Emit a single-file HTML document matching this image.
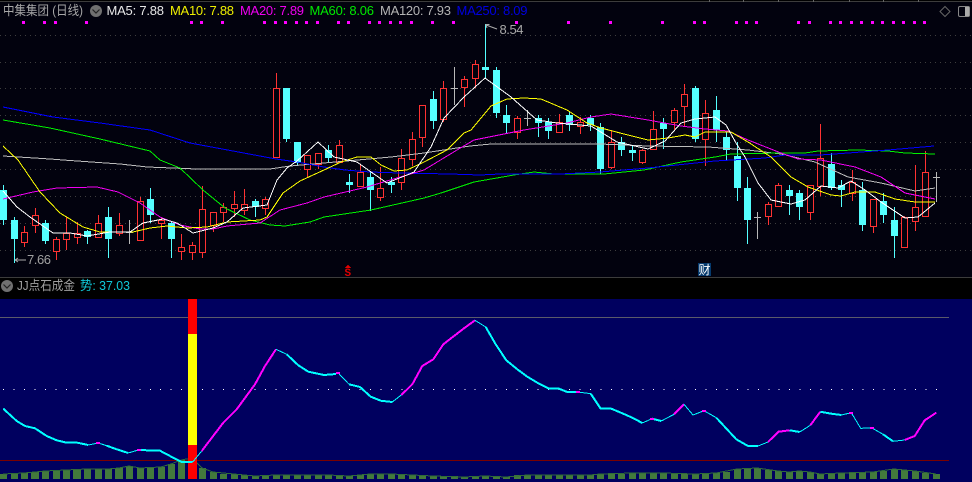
<!DOCTYPE html>
<html><head><meta charset="utf-8"><style>
html,body{margin:0;padding:0;background:#02020e;width:972px;height:482px;overflow:hidden}
svg{display:block}
text{font-family:"Liberation Sans","Noto Sans CJK SC",sans-serif;font-size:13px}
.a{shape-rendering:crispEdges}
.l{fill:none;stroke-width:1;shape-rendering:crispEdges}
</style></head><body>
<svg width="972" height="482" viewBox="0 0 972 482" xmlns="http://www.w3.org/2000/svg">
<rect width="972" height="482" fill="#02020e"/>
<rect class="a" y="0" width="972" height="2" fill="#000"/>
<rect class="a" y="1" width="972" height="1" fill="#3c3c3c"/>
<path class="a" d="M709.5 0v2M743.5 0v2M778.5 0v2M813.5 0v2M849.5 0v2M883.5 0v2M918.5 0v2" stroke="#666"/>
<!-- grid -->
<path class="a" d="M0 35.5H972M0 62.5H972M0 88.5H972M0 115.5H972M0 142.5H972M0 169.5H972M0 196.5H972M0 223.5H972M0 250.5H972" stroke="#3e3e3e" stroke-dasharray="1 4"/>
<!-- magenta markers -->
<path class="a" fill="#ff00ff" d="M22 21h3v3h-3zM43 21h3v3h-3zM54 21h3v3h-3zM85 21h3v3h-3zM190 21h3v3h-3zM200 21h3v3h-3zM221 21h3v3h-3zM263 21h3v3h-3zM274 21h3v3h-3zM284 21h3v3h-3zM295 21h3v3h-3zM305 21h3v3h-3zM316 21h3v3h-3zM337 21h3v3h-3zM347 21h3v3h-3zM368 21h3v3h-3zM378 21h3v3h-3zM389 21h3v3h-3zM399 21h3v3h-3zM410 21h3v3h-3zM431 21h3v3h-3zM452 21h3v3h-3zM515 21h3v3h-3zM567 21h3v3h-3zM609 21h3v3h-3zM661 21h3v3h-3zM693 21h3v3h-3zM703 21h3v3h-3zM735 21h3v3h-3zM745 21h3v3h-3zM755 21h3v3h-3zM797 21h3v3h-3zM808 21h3v3h-3zM829 21h3v3h-3zM839 21h3v3h-3zM850 21h3v3h-3zM860 21h3v3h-3zM871 21h3v3h-3zM881 21h3v3h-3zM892 21h3v3h-3zM902 21h3v3h-3zM913 21h3v3h-3zM923 21h3v3h-3z"/>
<!-- header text -->
<text x="3" y="15" fill="#a8a8a8" textLength="80" lengthAdjust="spacingAndGlyphs">中集集团 (日线)</text>
<circle cx="96" cy="11" r="6" fill="#707070"/><path d="M92.5 9.5l3.5 3.5 3.5-3.5" fill="none" stroke="#222" stroke-width="1.2"/>
<text x="106.5" y="15" fill="#e8e8e8" textLength="57.5">MA5: 7.88</text>
<text x="170" y="15" fill="#f0f000" textLength="64">MA10: 7.88</text>
<text x="240" y="15" fill="#f000f0" textLength="64">MA20: 7.89</text>
<text x="309.5" y="15" fill="#00e800" textLength="64.5">MA60: 8.06</text>
<text x="380" y="15" fill="#b4b4b4" textLength="71">MA120: 7.93</text>
<text x="456.5" y="15" fill="#0000e0" textLength="71">MA250: 8.09</text>
<!-- top right icons -->
<path d="M945 6.5l5 5-5 5-5-5z" fill="none" stroke="#666"/>
<rect x="958.5" y="6.5" width="11" height="10" rx="1.5" fill="none" stroke="#888"/><rect class="a" x="965" y="7" width="4" height="9" fill="#aaa"/>
<!-- wicks -->
<path class="a" stroke="#ff3232" d="M24.5 226V247M35.5 208V233M56.5 237V260M66.5 217V250M77.5 222V244M98.5 215V237M119.5 213V236M140.5 197V241M161.5 217V239M181.5 234V260M192.5 242V260M202.5 186V258M213.5 212V232M223.5 203V222M234.5 191V217M244.5 189V215M265.5 197V215M276.5 73V157M307.5 155V178M318.5 153V169M339.5 140V162M360.5 165V186M380.5 167V201M401.5 149V190M412.5 132V166M422.5 105V147M443.5 81V122M464.5 76V107M475.5 60V88M517.5 116V139M559.5 114V133M580.5 117V134M611.5 130V169M642.5 149V164M653.5 111V149M674.5 108V131M684.5 84V127M705.5 100V166M768.5 202V225M778.5 183V207M810.5 185V220M820.5 124V196M852.5 170V201M873.5 199V233M904.5 216V247M915.5 165V231M925.5 151V216"/>
<path class="a" stroke="#54ffff" d="M3.5 185V225M14.5 217V263M45.5 220V244M87.5 230V244M108.5 207V258M150.5 188V223M171.5 222V258M255.5 199V217M286.5 88V142M297.5 142V166M328.5 145V162M349.5 174V193M370.5 172V211M391.5 177V193M433.5 91V129M485.5 24V78M496.5 67V118M506.5 105V134M538.5 115V137M548.5 118V139M569.5 112V131M590.5 115V131M600.5 123V174M621.5 137V156M632.5 146V161M663.5 118V149M695.5 86V142M716.5 96V142M726.5 132V161M737.5 142V201M747.5 177V244M789.5 185V215M799.5 190V220M831.5 153V190M841.5 180V207M862.5 182V231M883.5 193V223M894.5 207V258"/>
<path class="a" stroke="#b8b8b8" d="M129.5 220V244M126 232.5H133M454.5 67V105M451 88.5H458M527.5 110V126M524 118.5H531M757.5 212V239M754 217.5H761M936.5 172V202M933 177.5H940"/>
<!-- bodies -->
<path class="a" fill="#02020e" stroke="#ff3232" d="M21.5 232.5h6V242.5h-6zM32.5 215.5h6V225.5h-6zM53.5 239.5h6V251.5h-6zM63.5 233.5h6V239.5h-6zM74.5 233.5h6V237.5h-6zM95.5 223.5h6V237.5h-6zM116.5 225.5h6V233.5h-6zM137.5 201.5h6V240.5h-6zM158.5 220.5h6V223.5h-6zM178.5 247.5h6V251.5h-6zM189.5 245.5h6V252.5h-6zM199.5 209.5h6V252.5h-6zM210.5 212.5h6V225.5h-6zM220.5 207.5h6V212.5h-6zM231.5 204.5h6V208.5h-6zM241.5 204.5h6V210.5h-6zM262.5 199.5h6V208.5h-6zM273.5 88.5h6V157.5h-6zM304.5 155.5h6V169.5h-6zM315.5 153.5h6V164.5h-6zM336.5 145.5h6V162.5h-6zM357.5 172.5h6V186.5h-6zM377.5 188.5h6V197.5h-6zM398.5 158.5h6V182.5h-6zM409.5 139.5h6V159.5h-6zM419.5 105.5h6V137.5h-6zM440.5 88.5h6V119.5h-6zM461.5 79.5h6V87.5h-6zM472.5 64.5h6V78.5h-6zM514.5 118.5h6V132.5h-6zM556.5 122.5h6V132.5h-6zM577.5 122.5h6V126.5h-6zM608.5 142.5h6V167.5h-6zM639.5 150.5h6V162.5h-6zM650.5 129.5h6V149.5h-6zM671.5 110.5h6V122.5h-6zM681.5 94.5h6V106.5h-6zM702.5 113.5h6V139.5h-6zM765.5 204.5h6V216.5h-6zM775.5 185.5h6V206.5h-6zM807.5 185.5h6V212.5h-6zM817.5 158.5h6V186.5h-6zM849.5 182.5h6V193.5h-6zM870.5 199.5h6V226.5h-6zM901.5 217.5h6V247.5h-6zM912.5 207.5h6V221.5h-6zM922.5 172.5h6V216.5h-6z"/>
<path class="a" fill="#54ffff" d="M0 190h7V220h-7zM11 220h7V239h-7zM42 223h7V241h-7zM84 231h7V237h-7zM105 217h7V239h-7zM147 199h7V215h-7zM168 223h7V239h-7zM252 201h7V207h-7zM283 88h7V139h-7zM294 142h7V163h-7zM325 150h7V158h-7zM346 182h7V185h-7zM367 177h7V190h-7zM388 182h7V185h-7zM430 99h7V121h-7zM482 67h7V70h-7zM493 70h7V113h-7zM503 115h7V123h-7zM535 118h7V123h-7zM545 122h7V131h-7zM566 115h7V125h-7zM587 118h7V125h-7zM597 127h7V169h-7zM618 142h7V150h-7zM629 150h7V153h-7zM660 123h7V129h-7zM692 88h7V139h-7zM713 110h7V130h-7zM723 137h7V150h-7zM734 156h7V188h-7zM744 188h7V220h-7zM786 190h7V196h-7zM796 193h7V207h-7zM828 164h7V188h-7zM838 185h7V190h-7zM859 190h7V225h-7zM880 201h7V215h-7zM891 220h7V236h-7z"/>
<!-- MA lines -->
<polyline class="l" stroke="#bdbdbd" points="3,156 50,159 63,160 120,164 147,167 197,169 270,169 290,166 324,163 391,157 424,153 470,146 491,144 600,144 648,146 708,147 748,150 781,154 815,162 848,177 881,183 915,191 935,188"/>
<polyline class="l" stroke="#00f000" points="3,120 50,128 100,139 150,151 160,160 180,168 203,190 225,208 250,220 270,225 285,226 310,222 324,217 371,210 424,198 441,193 474,182 514,175 534,172 554,174 604,174 644,170 681,162 715,157 731,154 781,153 805,153 818,151 858,150 888,151 905,153 935,154"/>
<polyline class="l" stroke="#0000ff" points="3,107 53,117 100,123 150,130 190,143 276,159 297,162 324,167 345,170 370,172 400,173 450,174 480,175 500,174 530,174 560,174 600,172 648,168 715,161 765,158 785,155 820,155 848,153 888,150 934,146"/>
<polyline class="l" stroke="#f000f0" points="3,199 33,192 57,188 97,187 118,192 140,203 160,217 180,225 200,229 213,229 227,226 260,223 280,210 307,203 324,197 367,187 407,175 424,170 457,150 474,140 524,130 567,123 591,117 611,114 648,120 681,126 705,129 728,131 748,140 781,153 798,159 821,160 855,167 881,177 905,193 935,199"/>
<polyline class="l" stroke="#ffff00" points="3,146 18,160 40,192 60,213 83,227 100,232 133,232 150,228 167,226 187,228 207,227 227,222 260,220 267,217 283,193 300,181 324,170 341,162 357,157 371,157 381,165 394,171 407,170 424,162 447,150 464,133 471,130 491,106 507,99 524,98 541,99 567,110 587,123 601,128 624,134 648,140 668,138 685,135 695,137 705,132 731,132 748,142 771,157 791,177 808,187 831,195 841,196 855,192 875,192 895,199 915,202 935,202"/>
<polyline class="l" stroke="#ffffff" points="3,191 17,207 30,217 53,233 70,233 87,236 110,232 130,232 143,223 163,219 177,223 193,233 213,228 227,222 243,208 267,205 277,180 287,168 297,161 318,142 334,157 357,162 371,172 387,183 407,175 414,172 431,147 444,118 464,97 485,78 511,97 537,120 557,123 591,126 617,142 648,149 665,141 681,123 695,119 715,117 726,125 736,143 745,157 758,183 771,200 791,204 805,200 821,186 838,188 851,181 865,190 881,202 905,218 918,217 935,203"/>
<!-- price labels -->
<path d="M485.5 24.5h4M486 25l11 4M486 25l3 1M486 25l1 3" fill="none" stroke="#aaa"/>
<text x="499.5" y="34" fill="#a8a8a8" textLength="24">8.54</text>
<path d="M15 260h11M15 260l3-2M15 260l3 2" fill="none" stroke="#aaa"/>
<text x="27" y="264" fill="#a0a0a0" textLength="24">7.66</text>
<!-- S marker -->
<path class="a" d="M348 265l3.5 3h-7z" fill="#e00000"/>
<text x="344.5" y="276" fill="#e00000" style="font-size:11px;font-weight:bold;font-family:'Liberation Mono',monospace">S</text>
<!-- cai marker -->
<rect class="a" x="698" y="263" width="13" height="13" fill="#053a6e"/>
<text x="698.5" y="274" fill="#fff" style="font-size:12px">财</text>
<!-- separator and sub-header -->
<rect class="a" x="0" y="277" width="972" height="22" fill="#000"/>
<rect class="a" x="0" y="277" width="972" height="1" fill="#3c3c3c"/>
<circle cx="7" cy="286" r="6" fill="#707070"/><path d="M3.5 284.5l3.5 3.5 3.5-3.5" fill="none" stroke="#222" stroke-width="1.2"/>
<text x="17" y="290" fill="#a0a0a0" textLength="58" lengthAdjust="spacingAndGlyphs">JJ点石成金</text>
<text x="80" y="290" fill="#10c8d8" textLength="50" lengthAdjust="spacingAndGlyphs">势: 37.03</text>
<!-- lower panel -->
<rect class="a" x="0" y="299" width="972" height="183" fill="#00005f"/>
<rect class="a" x="0" y="317" width="949" height="1" fill="#5a5a6a"/>
<rect class="a" x="0" y="460" width="949" height="1" fill="#7a0000"/>
<path class="a" d="M3 389.5H937" stroke="#fff" stroke-dasharray="1 9.483"/>
<!-- bars -->
<path class="a" fill="#437a3c" d="M0 474h7V479h-7zM11 473h7V479h-7zM21 473h7V479h-7zM31 472h8V479h-8zM42 471h7V479h-7zM53 470h7V479h-7zM63 470h7V479h-7zM73 469h8V479h-8zM84 469h7V479h-7zM95 469h7V479h-7zM105 469h7V479h-7zM115 468h8V479h-8zM126 466h7V479h-7zM137 468h7V479h-7zM147 467h7V479h-7zM158 467h7V479h-7zM168 464h7V479h-7zM178 460h7V479h-7zM199 468h7V479h-7zM210 472h7V479h-7zM220 474h7V479h-7zM231 474h7V479h-7zM241 475h7V479h-7zM252 476h7V479h-7zM262 476h7V479h-7zM273 475h7V479h-7zM283 475h7V479h-7zM294 475h7V479h-7zM304 475h7V479h-7zM315 475h7V479h-7zM325 475h7V479h-7zM336 475h7V479h-7zM346 476h7V479h-7zM357 475h7V479h-7zM367 474h7V479h-7zM377 474h7V479h-7zM388 474h7V479h-7zM398 475h7V479h-7zM409 475h7V479h-7zM419 476h7V479h-7zM430 476h7V479h-7zM440 476h7V479h-7zM451 476h7V479h-7zM461 477h7V479h-7zM472 476h7V479h-7zM482 476h7V479h-7zM493 477h7V479h-7zM503 477h7V479h-7zM514 475h7V479h-7zM524 475h7V479h-7zM535 475h7V479h-7zM545 475h7V479h-7zM556 475h7V479h-7zM566 475h7V479h-7zM577 475h7V479h-7zM587 475h7V479h-7zM597 474h7V479h-7zM608 474h7V479h-7zM618 474h7V479h-7zM629 473h7V479h-7zM639 473h7V479h-7zM650 473h7V479h-7zM660 473h7V479h-7zM671 474h7V479h-7zM681 474h7V479h-7zM692 474h7V479h-7zM702 474h7V479h-7zM713 473h7V479h-7zM723 472h7V479h-7zM734 469h7V479h-7zM744 468h7V479h-7zM754 468h7V479h-7zM765 470h7V479h-7zM775 471h7V479h-7zM786 472h7V479h-7zM796 471h7V479h-7zM807 472h7V479h-7zM817 474h7V479h-7zM828 474h7V479h-7zM838 473h7V479h-7zM849 473h7V479h-7zM859 472h7V479h-7zM870 472h7V479h-7zM880 471h7V479h-7zM891 469h7V479h-7zM901 470h7V479h-7zM912 471h7V479h-7zM922 473h7V479h-7zM933 474h7V479h-7z"/>
<polyline class="l" stroke="#2f6a3a" points="3,474 24,473 35,472 45,471 66,470 87,469 108,469 119,468 129,466 140,468 161,467 171,464 181,460 192,458 202,468 213,472 234,474 255,476 276,475 328,475 349,476 370,474 391,474 412,475 433,476 464,477 485,476 506,477 527,475 590,475 600,474 632,473 663,473 695,474 716,473 737,469 757,468 778,471 789,472 799,471 810,472 820,474 841,473 873,472 894,469 915,471 936,474"/>
<!-- signal bar -->
<rect class="a" x="188" y="299" width="9" height="180" fill="#ff0000"/>
<rect class="a" x="188" y="334" width="9" height="111" fill="#ffff00"/>
<!-- oscillator: cyan -->
<g class="l" fill="none">
<polyline stroke="#00ffff" stroke-width="2" points="3.3,408.7 16.7,421 25,426 35,428.3 46.7,436 56.7,440.3 66.7,442.7 77.3,442.7 88.3,445"/>
<polyline stroke="#00ffff" stroke-width="1" points="88.3,445 98.3,443 106.7,445.7"/>
<polyline stroke="#00ffff" stroke-width="2" points="106.7,445.7 116.7,449.3 128.3,453"/>
<polyline stroke="#00ffff" stroke-width="1" points="128.3,453 138.3,450"/>
<polyline stroke="#00ffff" stroke-width="2" points="138.3,450 160,450.7 170,456 181.7,462 192.7,462"/>
<polyline stroke="#00ffff" stroke-width="1" points="192.7,462 201.7,451"/>
<polyline stroke="#ff00ff" stroke-width="2" points="201.7,451 223.3,422.7 236.7,409.3 255,384.3 265,366 276,349.3"/>
<polyline stroke="#00ffff" stroke-width="1" points="276,349.3 286.7,354.3"/>
<polyline stroke="#00ffff" stroke-width="2" points="286.7,354.3 298.3,365.3 308.3,371.7 324,375 336,374"/>
<polyline stroke="#00ffff" stroke-width="1" points="338,372.7 349,384.3"/>
<polyline stroke="#00ffff" stroke-width="2" points="349,384.3 360,387 370.7,396.7 380.7,400.7 392.3,402"/>
<polyline stroke="#00ffff" stroke-width="1" points="392.3,402 401.3,395"/>
<polyline stroke="#ff00ff" stroke-width="2" points="401.3,395 412.3,384.3 422.3,366 433.3,359.3 443.3,344.3 454,336 464,328.3 475,320.3"/>
<polyline stroke="#00ffff" stroke-width="1" points="475,320.3 485.7,327"/>
<polyline stroke="#00ffff" stroke-width="2" points="485.7,327 495.7,344.3 506.3,360.3 517.3,369.3 527.3,376.7 537.3,382.7 549,388.7 559,388.7 567.3,392 578,392"/>
<polyline stroke="#00ffff" stroke-width="1" points="578,392 590.7,393.7"/>
<polyline stroke="#00ffff" stroke-width="2" points="590.7,393.7 600.7,408.7 611.3,408.7 622.3,413.3 632.3,417.7 642.3,423"/>
<polyline stroke="#00ffff" stroke-width="1" points="642.3,423 652,418.7"/>
<polyline stroke="#00ffff" stroke-width="2" points="652,418.7 661.3,421"/>
<polyline stroke="#00ffff" stroke-width="1" points="661.3,421 674,414.3"/>
<polyline stroke="#ff00ff" stroke-width="2" points="674,414.3 684,404.3"/>
<polyline stroke="#00ffff" stroke-width="1" points="684,404.3 693,415 704,410.7 716.3,417.7"/>
<polyline stroke="#00ffff" stroke-width="2" points="716.3,417.7 736.3,439.3 748,446 758,446"/>
<polyline stroke="#00ffff" stroke-width="1" points="758,446 768,442"/>
<polyline stroke="#ff00ff" stroke-width="2" points="768,442 778.7,431.7 789.7,430.3"/>
<polyline stroke="#00ffff" stroke-width="2" points="789.7,430.3 799.7,432"/>
<polyline stroke="#00ffff" stroke-width="1" points="799.7,432 810.3,425.3"/>
<polyline stroke="#ff00ff" stroke-width="2" points="810.3,425.3 820.3,411.7"/>
<polyline stroke="#00ffff" stroke-width="2" points="820.3,411.7 831.3,413.7 841.3,415"/>
<polyline stroke="#00ffff" stroke-width="1" points="841.3,415 851.3,412.7 860.7,428.3 872,428 883,434.3"/>
<polyline stroke="#00ffff" stroke-width="2" points="883,434.3 893,441.3"/>
<polyline stroke="#00ffff" stroke-width="1" points="893,441.3 904.7,440"/>
<polyline stroke="#ff00ff" stroke-width="2" points="904.7,440 914.7,436 924.7,420.3 936.3,412.7"/>
<!-- small magenta ticks -->
<path stroke="#ff00ff" stroke-width="2" d="M96 443h4M137 450h4M336 373h4M576 392h4M650 419h4M702 411h4M849 413h4M870 428h4"/>
</g>
</svg>
</body></html>
